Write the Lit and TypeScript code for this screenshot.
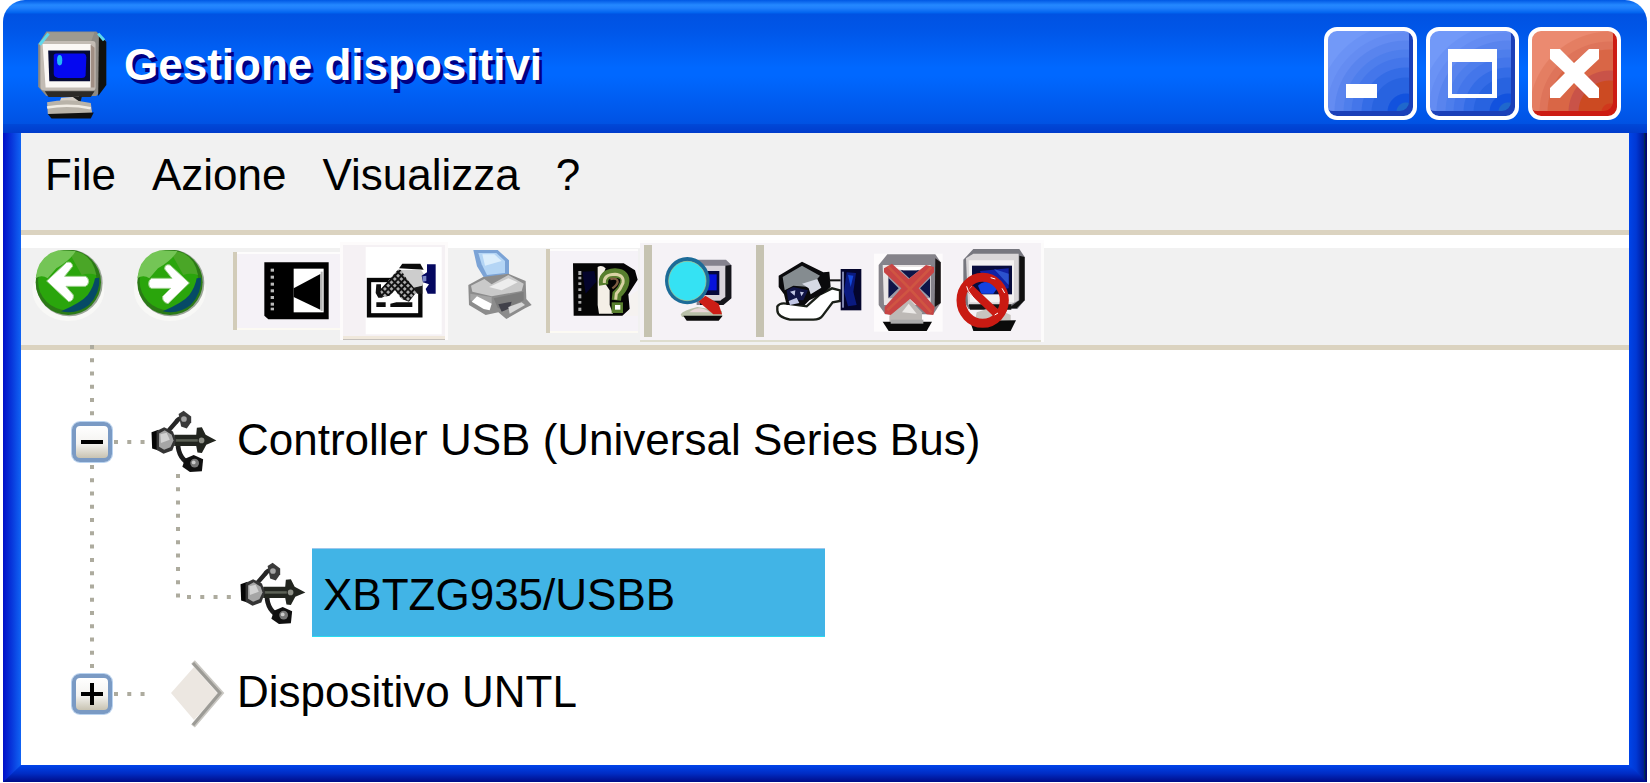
import { LitElement, html, css, svg } from "lit";
import { customElement, property, state } from "lit/decorators.js";

/* Monitor used by the title bar, drawn in a 200 x 270 box. */
const monitor = svg`
  <path d="M30 20 L165 20 L190 45 L190 165 L165 195 L30 195 L8 170 L8 55 Z" fill="#8d8a84"/>
  <path d="M172 28 L192 48 L192 165 L170 195 Z" fill="#11120f"/>
  <path d="M32 22 L160 22 L150 50 L20 50 Z" fill="#9d9a90"/>
  <path d="M14 52 Q14 46 22 46 L155 46 Q163 46 163 54 L163 172 Q163 180 155 180 L24 180 Q14 180 14 170 Z" fill="#c3bcb4"/>
  <path d="M20 54 L150 54 L150 172 L28 172 Z" fill="#fbf8f5"/>
  <path d="M150 56 L160 64 L160 172 L150 172 Z" fill="#a08f84"/>
  <path d="M35 72 L148 72 L148 155 L38 155 Z" fill="#050a33"/>
  <path d="M50 84 Q52 80 58 80 L132 80 Q138 82 138 90 L136 140 Q134 146 126 146 L62 146 Q50 144 50 134 Z" fill="#0508f0"/>
  <path d="M26 182 L160 182 L150 198 L36 198 Z" fill="#2c2a28"/>
  <path d="M70 200 L118 196 L124 222 L62 222 Z" fill="#d5cec6"/>
  <path d="M100 196 L126 196 L122 212 Z" fill="#1c1c1c"/>
  <path d="M32 212 Q90 200 150 214 L154 244 L34 244 Z" fill="#b9b3a9"/>
  <path d="M32 226 Q90 216 150 228" stroke="#f1ece4" stroke-width="7" fill="none"/>
  <path d="M34 244 L158 240 L150 256 L44 256 Z" fill="#101010"/>`;

const usb = html`<svg class="usb" viewBox="260 205 216 216" aria-hidden="true">
  <path d="M316 284 L344 252 Q352 238 366 236" fill="none" stroke="#262626" stroke-width="14"/>
  <path d="M352 318 Q352 368 398 388" fill="none" stroke="#1b1b1b" stroke-width="15"/>
  <path d="M354 224 L370 214 L394 232 L394 250 L380 270 L362 264 Z" fill="#3a3a3a"/>
  <circle cx="371" cy="240" r="9" fill="#a5a5a5"/>
  <path d="M340 290 H410 L412 268 L428 266 L440 290 L474 308 L442 322 L428 348 L414 346 L410 326 H340 Z" fill="#22251f"/>
  <path d="M345 308 H415" stroke="#5c6156" stroke-width="8"/>
  <circle cx="427" cy="308" r="9" fill="#8e9087"/>
  <path d="M268 282 L290 274 V340 L270 334 Z" fill="#050505"/>
  <path d="M284 278 L308 266 L336 280 L346 308 L334 340 L306 350 L284 338 Z" fill="#343434"/>
  <path d="M292 286 L310 276 L332 290 L338 308 L328 330 L308 338 L292 328 Z" fill="#a5a5a5"/>
  <path d="M296 288 L316 284 L326 306 L298 316 Z" fill="#d2d2d2"/>
  <path d="M374 366 L402 354 L432 368 L428 406 L390 408 L366 392 Z" fill="#101010"/>
  <circle cx="405" cy="380" r="14" fill="#777"/><circle cx="402" cy="378" r="6" fill="#ccc"/>
</svg>`;

const diamond = html`<svg class="diamond" viewBox="0 0 56 68" aria-hidden="true">
  <path d="M1 33 L24 7 L48 34 L24 60 Z" fill="#ece7e1"/>
  <path d="M23 2 L51 33 L23 66" fill="none" stroke="#c9c7c2" stroke-width="5"/>
  <path d="M23 3 L50 33 L23 65" fill="none" stroke="#9c9b96" stroke-width="3"/>
</svg>`;

const backArrow = svg`<path d="M80 168 L140 112 Q156 108 158 124 L134 154 H196 Q206 158 206 170 Q204 182 196 184 H138 L160 210 Q162 228 146 230 Z" fill="#fff" stroke="#9bd08a" stroke-width="3"/>`;
const forwardArrow = svg`<path d="M508 174 L450 120 Q434 116 434 132 L456 160 H394 Q386 166 386 176 Q386 188 394 190 H452 L428 214 Q426 232 444 236 Z" fill="#fff" stroke="#9bd08a" stroke-width="3"/>`;

const ball = (cx: number) => svg`
  <ellipse cx="${cx}" cy="196" rx="108" ry="92" fill="#f8f8f6"/>
  <circle cx="${cx + 3}" cy="174" r="100" fill="#9aa597"/>
  <circle cx="${cx}" cy="172" r="98" fill="#2b7a16"/>
  <circle cx="${cx - 3}" cy="168" r="88" fill="#2aa50c"/>
  <path d="M${cx - 22} 259 Q${cx + 40} 232 ${cx + 58} 210 Q${cx + 76} 185 ${cx + 80} 160 L${cx + 93} 158 Q${cx + 96} 205 ${cx + 62} 240 Q${cx + 24} 270 ${cx - 22} 259 Z" fill="#064a66"/>
  <path d="M${cx} 78 Q${cx + 70} 76 ${cx + 84} 150 Q${cx + 62} 142 ${cx + 40} 150 Z" fill="#4aa627"/>
  <path d="M${cx - 98} 160 Q${cx - 92} 92 ${cx - 30} 76 L${cx + 22} 78 Q${cx + 6} 106 ${cx - 36} 130 L${cx - 62} 160 Q${cx - 80} 148 ${cx - 98} 160 Z" fill="#74c556"/>`;

const minimizeIcon = html`<svg class="glyph" viewBox="0 0 85 85" aria-hidden="true"><rect x="18" y="53" width="31" height="14" fill="#fff"/></svg>`;
const maximizeIcon = html`<svg class="glyph" viewBox="0 0 85 85" aria-hidden="true"><path d="M18 18 H67 V67 H18 Z M22 31 V63 H62 V31 Z" fill="#fff" fill-rule="evenodd"/></svg>`;
const closeIcon = html`<svg class="glyph" viewBox="0 0 85 85" aria-hidden="true"><path d="M18 18 H28 L42 32 L57 18 H67 V28 L52 42 L67 57 V67 H57 L42 52 L28 67 H18 V57 L33 42 L18 28 Z" fill="#fff"/></svg>`;

interface TreeNode {
  label: string;
  icon: "usb" | "diamond";
  open?: boolean;
  selected?: boolean;
  children?: TreeNode[];
}

@customElement("caption-button")
class CaptionButton extends LitElement {
  @property() label = "";
  @property({ reflect: true }) tone = "blue";

  static styles = css`
    :host { display: block; }
    .btn {
      display: block;
      box-sizing: border-box;
      width: 93px;
      height: 93px;
      padding: 0;
      border: 4px solid #fff;
      border-radius: 13px;
      background: radial-gradient(circle at 78px 81px, #1f68cc 0 9px, #1252de 10px 18px, #2863e0 19px 34px, #346ce6 35px 44px, #4476ea 45px 54px, #4e7eec 55px 62px, #5984ee 63px 71px, #648cf2 72px 79px, #6a92f5 80px 88px, #7299f8 89px);
      box-shadow: inset -4px -5px 0 #1b40b8;
      cursor: pointer;
    }
    :host([tone="red"]) .btn {
      background: radial-gradient(circle at 78px 81px, #d0381c 0 8px, #cc4a22 9px 31px, #c95348 32px 41px, #d96646 42px 62px, #de745a 63px 70px, #e47e62 71px 80px, #eb8a70 81px);
      box-shadow: inset -4px -5px 0 #cc1c12;
    }
    ::slotted(svg) { display: block; width: 85px; height: 85px; }
  `;

  render() {
    return html`<button class="btn" type="button" aria-label=${this.label}><slot></slot></button>`;
  }
}

@customElement("tool-button")
class ToolButton extends LitElement {
  @property() label = "";

  static styles = css`
    :host { display: block; flex: none; }
    .btn { display: block; padding: 0; border: 0; background: none; cursor: pointer; }
    ::slotted(svg) { display: block; }
  `;

  render() {
    return html`<button class="btn" type="button" aria-label=${this.label}><slot></slot></button>`;
  }
}

@customElement("device-toolbar")
class DeviceToolbar extends LitElement {
  static styles = css`
    :host {
      display: flex;
      align-items: center;
      padding: 5px 8px 3px;
      background: linear-gradient(#fff 13px, #f1f1f1 13px);
      border-bottom: 5px solid #dbd3c0;
    }
    svg { display: block; }
    .nav { display: flex; gap: 22px; margin-right: 22px; }
    .group { display: flex; align-items: center; box-sizing: border-box; }
    .bar { flex: none; width: 4px; align-self: stretch; background: #d2ccb9; }
    .thick { width: 8px; height: 92px; align-self: center; background: #c6c3b2; }
    .soft { background: #f5f2f7; box-shadow: inset 0 2px #fdfcfc, inset 0 -2px #fcfaf3; }
    .raised { background: #f5f1f4; box-shadow: inset 3px 3px #fdfbfb, inset -3px 0 #fdfbfb, inset 0 -1px #c5c0bb, inset 0 -4px #f0e8dc; }
    .help { margin-right: 2px; }
    .wide { padding-left: 4px; background: #f5f2f6; box-shadow: inset 0 3px #fdfcfd, inset -3px 0 #fcfbfb, inset 0 -2px #deddce; }
  `;

  render() {
    return html`
      <div class="nav">
        <tool-button label="Indietro">
          <svg width="80" height="102" viewBox="27 45 240 306">
            <clipPath id="cb"><rect x="27" y="75" width="240" height="276"/></clipPath>
            <g clip-path="url(#cb)">${ball(145)}${backArrow}</g>
          </svg>
        </tool-button>
        <tool-button label="Avanti">
          <svg width="80" height="102" viewBox="333 45 240 306">
            <clipPath id="cf"><rect x="333" y="75" width="240" height="276"/></clipPath>
            <g clip-path="url(#cf)">${ball(450)}${forwardArrow}</g>
          </svg>
        </tool-button>
      </div>

      <div class="group soft">
        <span class="bar"></span>
        <tool-button label="Mostra albero">
          <svg width="103" height="78" viewBox="651 81 309 234">
            <path d="M733 112 H926 V283 H745 L733 272 Z" fill="#000"/>
            <g fill="#b9b9b9">
              <rect x="752" y="131" width="10" height="9"/><rect x="752" y="152" width="10" height="9"/>
              <rect x="752" y="173" width="10" height="9"/><rect x="752" y="193" width="10" height="9"/>
              <rect x="752" y="213" width="10" height="9"/><rect x="752" y="233" width="10" height="9"/>
              <rect x="752" y="248" width="10" height="8"/>
            </g>
            <rect x="821" y="131" width="90" height="131" fill="#fff"/>
            <path d="M821 190 L901 147 V254 L821 216 Z" fill="#000"/>
            <rect x="902" y="140" width="6" height="118" fill="#b5b5b5"/>
          </svg>
        </tool-button>
      </div>

      <div class="group raised">
        <tool-button label="Proprietà">
          <svg width="108" height="98" viewBox="15 51 324 294">
            <defs>
              <pattern id="check" width="14" height="14" patternUnits="userSpaceOnUse" patternTransform="rotate(45 190 133)">
                <rect width="14" height="14" fill="#121212"/>
                <rect x="3" y="3" width="8" height="8" fill="#b4b4b4"/>
              </pattern>
            </defs>
            <rect x="92" y="66" width="228" height="262" fill="#fff"/>
            <rect x="102" y="165" width="154" height="106" fill="#fff" stroke="#060606" stroke-width="13"/>
            <path d="M118 182 V262" stroke="#fff" stroke-width="8"/>
            <path d="M124 232 H152 V246 H124 Z M166 236 L184 232 H232 V246 H166 Z" fill="#0c0c0c"/>
            <path d="M124 178 H138 V190 L148 204 L142 218 H130 L122 204 Z" fill="#111"/>
            <path d="M134 196 L190 133 L212 140 L258 184 L222 230 L200 222 L180 196 L164 212 L144 216 Z" fill="url(#check)"/>
            <path d="M192 130 L202 116 H256 L266 134 Z" fill="#0b0b0b"/>
            <path d="M198 135 L258 134 L274 158 L260 184 L238 190 L214 160 Z" fill="#cdcdcd"/>
            <path d="M236 188 L262 182 L262 206 L246 206 Z" fill="#1a1a1a"/>
            <path d="M276 118 H302 V206 H278 L272 192 L282 178 L264 172 L260 152 L276 142 Z" fill="#050860"/>
            <path d="M262 154 L274 152 L274 168 L264 170 Z" fill="#7c88c8"/>
          </svg>
        </tool-button>
      </div>

      <tool-button label="Stampa">
        <svg width="98" height="102" viewBox="339 45 294 306">
          <path d="M415 75 H488 L522 106 V148 L500 150 L448 160 L426 124 Z" fill="#7ba3d6"/>
          <path d="M430 84 H484 L510 108 V144 L456 150 L440 118 Z" fill="#b4d5f5"/>
          <path d="M442 88 H478 L500 108 L450 122 Z" fill="#dceefc"/>
          <path d="M400 180 L444 156 L520 146 L572 168 L574 222 L590 240 L570 250 L514 282 L490 262 L452 270 L402 240 Z" fill="#8c8c8c"/>
          <path d="M408 182 L448 162 L470 178 L520 150 L566 176 L560 198 L470 214 L412 200 Z" fill="#c9c9c9"/>
          <path d="M462 186 L520 160 L548 172 L500 196 Z" fill="#ededed"/>
          <path d="M406 206 L470 216 L470 240 L406 226 Z" fill="#a5a5a5"/>
          <path d="M410 230 L426 214 L470 236 L464 256 L446 252 Z" fill="#fff"/>
          <path d="M476 220 L566 200 L566 226 L530 242 L508 258 L488 248 Z" fill="#7c7c7c"/>
          <path d="M490 238 L530 230 L524 250 L500 260 Z" fill="#41414a"/>
          <path d="M520 246 L560 232 L570 240 L524 266 Z" fill="#d8d8d8"/>
        </svg>
      </tool-button>

      <div class="group soft help">
        <span class="bar"></span>
        <tool-button label="Guida">
          <svg width="88" height="84" viewBox="645 72 264 252">
            <path d="M714 115 H866 L900 136 L908 164 L880 208 L884 252 L862 272 H716 Z" fill="#050505"/>
            <path d="M742 140 L778 138 L784 170 L752 206 Z" fill="#04042c"/>
            <path d="M788 126 Q800 118 812 130 L800 160 L824 196 L824 240 L834 266 H792 L788 240 Z" fill="#f4efe6"/>
            <path d="M884 212 L909 196 V272 H872 L886 250 Z" fill="#f5f2f0"/>
            <g fill="#aaa">
              <rect x="730" y="138" width="9" height="12"/><rect x="730" y="155" width="9" height="8"/>
              <rect x="730" y="172" width="9" height="8"/><rect x="730" y="190" width="9" height="8"/>
              <rect x="730" y="208" width="9" height="12"/><rect x="730" y="228" width="9" height="8"/><rect x="730" y="248" width="9" height="10"/>
            </g>
            <path d="M806 180 Q800 146 840 144 Q876 146 868 176 Q862 194 846 208 L844 226" fill="none" stroke="#587f2e" stroke-width="28"/>
            <path d="M808 174 Q806 148 840 148 Q868 150 864 174 Q856 194 844 206 L842 224" fill="none" stroke="#d9d2a4" stroke-width="9"/>
            <path d="M826 162 Q848 158 848 170 Q846 180 832 190" fill="none" stroke="#7e5d42" stroke-width="7"/>
            <rect x="830" y="232" width="34" height="32" fill="#587f2e"/><rect x="840" y="240" width="16" height="14" fill="#fff"/>
          </svg>
        </tool-button>
      </div>

      <div class="group wide">
        <span class="bar thick"></span>
        <tool-button label="Rileva modifiche hardware">
          <svg width="104" height="102" viewBox="36 45 312 306">
            <path d="M168 104 H258 L274 120 V220 L250 240 H170 Z" fill="#85828e"/>
            <path d="M256 122 L274 120 V220 L250 240 H180 V228 H242 Z" fill="#15151b"/>
            <path d="M172 122 H256 V216 L242 226 H190 Z" fill="#d8d3da"/>
            <rect x="184" y="138" width="54" height="72" fill="#06083c"/>
            <rect x="198" y="148" width="32" height="48" fill="#0612dc"/>
            <path d="M122 268 Q130 256 172 246 L246 258 L246 274 L126 276 Z" fill="#b9c0a9"/>
            <path d="M148 262 Q176 238 210 262 Z" fill="#e9d6d8"/>
            <path d="M130 272 H248 L236 287 H140 Z" fill="#0b0b0b"/>
            <path d="M176 230 L196 212 L236 236 L246 268 L220 268 Z" fill="#cc1e16"/>
            <ellipse cx="142" cy="167" rx="67" ry="71" fill="#1c6b98"/>
            <ellipse cx="142" cy="168" rx="56" ry="59" fill="#35e2f3" stroke="#b6c98a" stroke-width="2"/>
          </svg>
        </tool-button>
        <span class="bar thick"></span>
        <tool-button label="Aggiorna driver">
          <svg width="104" height="102" viewBox="372 45 312 306">
            <path d="M412 244 Q420 232 440 236 L500 244 L540 208 L576 190 L600 196 V228 L578 232 L548 272 Q540 284 520 284 H450 Q412 276 412 256 Z" fill="#fff" stroke="#1a1f18" stroke-width="7"/>
            <path d="M416 152 L486 110 L550 142 L568 140 L572 186 L548 206 L508 226 L494 240 H440 L432 208 L416 186 Z" fill="#0a0a0c"/>
            <path d="M428 156 L486 122 L540 152 L510 186 L460 182 L434 196 Z" fill="#858c90"/>
            <path d="M486 176 L532 162 L544 188 L512 208 L506 190 Z" fill="#d5d9e4"/>
            <path d="M440 196 L460 186 L504 196 L490 226 L444 226 Z" fill="#111546"/>
            <path d="M450 200 L466 196 L464 212 Z M480 200 L492 202 L484 214 Z M446 228 L470 218 L478 234 L450 240 Z" fill="#c0c6e4"/>
            <path d="M566 166 H602" stroke="#111" stroke-width="6"/>
            <path d="M602 132 H664 V256 H602 Z" fill="#04052c"/>
            <path d="M620 142 L648 144 L640 200 L650 240 L624 244 L612 200 Z" fill="#0a1a80"/>
            <path d="M624 150 L640 152 L632 186 Z" fill="#1448d8"/>
            <rect x="607" y="140" width="4" height="108" fill="#b7c0ec"/>
          </svg>
        </tool-button>
        <tool-button label="Disinstalla">
          <svg width="80" height="102" viewBox="684 45 240 306">
            <rect x="702" y="86" width="206" height="234" fill="#fdfbfc"/>
            <path d="M742 88 H886 L902 112 V234 L880 268 H736 L716 240 V120 Z" fill="#85838a"/>
            <path d="M886 100 L902 112 V234 L884 246 Z" fill="#181414"/>
            <path d="M728 120 H872 V240 H732 Z" fill="#e9e6e6"/>
            <path d="M744 136 H870 V220 H744 Z" fill="#9c9aa6"/>
            <path d="M746 160 L776 190 L746 218 Z M870 160 L840 190 L870 218 Z M782 136 H838 L808 160 Z" fill="#0d1448"/>
            <path d="M760 126 H858 L830 136 H790 Z" fill="#fff"/>
            <path d="M780 244 L808 222 L846 262 V290 H748 V272 Z" fill="#bdb9b6"/>
            <path d="M786 262 L806 236 L830 266 Z" fill="#eceae8"/>
            <path d="M728 290 H876 L860 318 H746 Z" fill="#090909"/>
            <rect x="752" y="284" width="98" height="12" fill="#aaa"/>
            <path d="M732 130 L756 116 L806 162 L858 120 L882 126 V142 L836 190 L884 246 L880 270 L860 268 L810 222 L752 270 L734 266 V246 L784 190 L732 142 Z" fill="#c84444"/>
            <path d="M744 124 L810 192 L874 262 M874 126 L810 192 L742 256" stroke="#cf5542" stroke-width="8" fill="none"/>
          </svg>
        </tool-button>
        <tool-button label="Disabilita">
          <svg width="96" height="102" viewBox="924 45 288 306">
            <path d="M1000 72 H1138 L1154 96 V226 L1132 252 H986 L970 226 V104 Z" fill="#77777f"/>
            <path d="M1138 92 L1154 96 V226 L1130 250 H1106 L1138 226 Z" fill="#111"/>
            <path d="M978 100 L1000 86 H1136 V226 L1110 240 H984 Z" fill="#d9d6d8"/>
            <path d="M986 106 H1122 V232 H990 Z" fill="#f3f1f1"/>
            <rect x="996" y="122" width="120" height="86" fill="#080c3c"/>
            <path d="M1020 138 L1106 130 V190 L1040 200 Z" fill="#1222a4"/>
            <path d="M1062 132 L1106 146 V180 Z" fill="#2b52ce"/>
            <path d="M1014 182 Q1036 160 1074 186 L1060 206 H1024 Z" fill="#1442e0"/>
            <path d="M986 238 H1114 V254 H990 Z" fill="#151515"/>
            <path d="M1010 262 L1060 246 L1112 270 V292 H1004 Z" fill="#c8c4bf"/>
            <path d="M990 288 L1128 286 L1112 318 H1000 Z" fill="#0b0b0b"/>
            <ellipse cx="1028" cy="226" rx="65" ry="69" fill="none" stroke="#c91a12" stroke-width="27"/>
            <path d="M990 190 L1068 264" stroke="#c91a12" stroke-width="24"/>
            <path d="M980 184 L984 196 L1010 232 M1052 158 L1066 162 M1086 190 L1094 204 M1064 270 L1074 264" stroke="#fff" stroke-width="3" fill="none"/>
          </svg>
        </tool-button>
      </div>
    `;
  }
}

@customElement("device-tree")
class DeviceTree extends LitElement {
  @state() private nodes: TreeNode[] = [
    {
      label: "Controller USB (Universal Series Bus)",
      icon: "usb",
      open: true,
      children: [{ label: "XBTZG935/USBB", icon: "usb", selected: true }],
    },
    { label: "Dispositivo UNTL", icon: "diamond", open: false },
  ];

  static styles = css`
    :host { display: block; padding-left: 51px; font-size: 44px; line-height: 48px; }
    ul { margin: 0; padding: 0; list-style: none; }
    svg { display: block; flex: none; overflow: visible; }
    .node { display: grid; grid-template-columns: 40px 1fr; }
    .rail { display: flex; flex-direction: column; align-items: center; }
    .lead { width: 4px; height: 14px; }
    .first .lead { height: 72px; }
    .tail { width: 4px; flex: 1; height: 0; }
    .dots { stroke: #adab9e; stroke-width: 4px; stroke-dasharray: 4 9.27; fill: none; }
    .toggle {
      flex: none;
      width: 40px;
      height: 40px;
      padding: 0;
      border: 4px solid #7a9ac4;
      border-radius: 8px;
      background: linear-gradient(#fff, #f4f3f0 55%, #c8c3b2);
      box-shadow: 0 0 0 1px #b9d3f0;
      cursor: pointer;
    }
    .first .branch { padding-top: 58px; padding-bottom: 23px; }
    .row { display: flex; align-items: center; height: 68px; }
    .link { width: 37px; height: 4px; }
    .usb { width: 68px; height: 68px; filter: blur(0.6px); }
    .row .usb { margin-right: 20px; }
    .diamond { width: 56px; height: 68px; margin: 0 11px 0 21px; filter: blur(0.6px); }
    .label { padding-bottom: 4px; white-space: nowrap; }
    .kids { padding-left: 64px; }
    .leaf { display: flex; align-items: flex-end; }
    .elbow { width: 62px; height: 161px; }
    .leaf .usb { padding-bottom: 9px; }
    .leaf .pick {
      box-sizing: border-box;
      width: 513px;
      margin: 0 0 0 6px;
      padding: 22px 11px 18px;
      border: 0 solid #9cc7ec;
      border-top-width: 1px;
      box-shadow: inset 0 -1px #2bdcf0;
      background: #41b4e6;
      color: #000;
      font: inherit;
      text-align: left;
      cursor: pointer;
    }
  `;

  private flip(i: number) {
    this.nodes = this.nodes.map((n, k) => (k === i ? { ...n, open: !n.open } : n));
  }

  private leaf(n: TreeNode) {
    return html`<li class="leaf">
      <svg class="elbow" viewBox="0 0 62 161" aria-hidden="true">
        <path class="dots" d="M2 -2 V124"/>
        <path class="dots" d="M11 121 H56"/>
      </svg>
      ${usb}
      <button class="pick" type="button" aria-pressed=${n.selected ? "true" : "false"}>${n.label}</button>
    </li>`;
  }

  render() {
    return html`<ul>
      ${this.nodes.map(
        (n, i) => html`<li class="node ${i === 0 ? "first" : ""}">
          <div class="rail">
            <svg class="lead" aria-hidden="true">
              <line class="dots" x1="2" x2="2" y1=${i === 0 ? -5 : 4} y2=${i === 0 ? 68 : 8}></line>
            </svg>
            <button class="toggle" type="button" aria-label=${n.label} aria-expanded=${n.open ? "true" : "false"} @click=${() => this.flip(i)}>
              <svg width="32" height="32" viewBox="0 0 32 32" aria-hidden="true">
                <path d=${n.open ? "M5 16 H27" : "M5 16 H27 M16 5 V27"} stroke="#000" stroke-width="4"/>
              </svg>
            </button>
            ${i < this.nodes.length - 1
              ? html`<svg class="tail" aria-hidden="true"><line class="dots" x1="2" x2="2" y1="3" y2="100%"></line></svg>`
              : ""}
          </div>
          <div class="branch">
            <div class="row">
              <svg class="link" aria-hidden="true"><line class="dots" x1="2" x2="34" y1="2" y2="2"></line></svg>
              ${n.icon === "usb" ? usb : diamond}
              <span class="label">${n.label}</span>
            </div>
            ${n.open && n.children ? html`<ul class="kids">${n.children.map((c) => this.leaf(c))}</ul>` : ""}
          </div>
        </li>`
      )}
    </ul>`;
  }
}

@customElement("app-root")
class AppRoot extends LitElement {
  static styles = css`
    :host {
      display: flex;
      flex-direction: column;
      box-sizing: border-box;
      min-height: 100vh;
      padding: 0 3px 1px;
      background: #fff;
      color: #000;
      font-family: "Liberation Sans", Arial, sans-serif;
    }
    .title {
      display: flex;
      align-items: center;
      padding: 27px 26px 13px 30px;
      border-radius: 22px 22px 0 0;
      background: linear-gradient(#0058e4 0, #2488ff 5px, #2080fc 8px, #0062ee 13px, #0052e2 14px, #0056e8 30px, #0068ff 68px, #0068ff 76px, #0054e6 120px, #0052e2 124px, #0048d8 124px, #003ccc 133px);
    }
    .logo { flex: none; width: 80px; height: 93px; filter: blur(0.6px); }
    .name {
      flex: 1;
      margin: 0 0 0 11px;
      padding-bottom: 17px;
      color: #fff;
      font-size: 44px;
      line-height: 48px;
      text-shadow: 3px 4px 0 #000084;
    }
    .controls { display: flex; gap: 9px; }
    .frame {
      flex: 1;
      display: grid;
      grid-template-columns: 18px 1fr 18px;
      grid-template-rows: 1fr 17px;
    }
    .left { grid-area: 1 / 1 / 3 / 2; background: linear-gradient(90deg, #0010c8, #0838dc 50%, #1064f4); }
    .right { grid-area: 1 / 3 / 3 / 4; background: linear-gradient(90deg, #0044e8, #0038d4 40%, #001c9c 80%, #00384c 85%, #00106c 90%, #000078); }
    .bottom {
      grid-area: 2 / 1 / 3 / 4;
      background: linear-gradient(#0044ea, #002cc4 50%, #000c88);
      clip-path: polygon(0 100%, 18px 0, calc(100% - 18px) 0, 100% 100%);
    }
    .client { grid-area: 1 / 2 / 2 / 3; min-width: 0; background: #fff; }
    .menu {
      display: flex;
      gap: 36px;
      padding: 18px 24px 31px;
      background: #f1f1f1;
      border-bottom: 5px solid #dbd3c0;
    }
    .entry {
      padding: 0;
      border: 0;
      background: none;
      color: #000;
      font-family: inherit;
      font-size: 44px;
      line-height: 48px;
      cursor: pointer;
    }
  `;

  render() {
    return html`
      <header class="title">
        <svg class="logo" viewBox="-6 8 216 252" preserveAspectRatio="none" aria-hidden="true">
          ${monitor}
          <path d="M12 56 L36 26 M170 26 L186 44" stroke="#5fd8ec" stroke-width="8"/>
          <ellipse cx="66" cy="98" rx="7" ry="14" fill="#25b8f4"/>
        </svg>
        <h1 class="name">Gestione dispositivi</h1>
        <div class="controls">
          <caption-button label="Riduci a icona">${minimizeIcon}</caption-button>
          <caption-button label="Ingrandisci">${maximizeIcon}</caption-button>
          <caption-button label="Chiudi" tone="red">${closeIcon}</caption-button>
        </div>
      </header>
      <div class="frame">
        <div class="left"></div>
        <div class="right"></div>
        <main class="client">
          <nav class="menu">
            ${["File", "Azione", "Visualizza", "?"].map((t) => html`<button class="entry" type="button">${t}</button>`)}
          </nav>
          <device-toolbar></device-toolbar>
          <device-tree></device-tree>
        </main>
        <div class="bottom"></div>
      </div>
    `;
  }
}
